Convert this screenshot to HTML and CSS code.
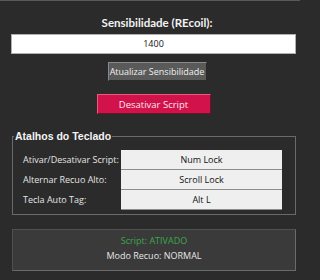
FILE: index.html
```html
<!DOCTYPE html>
<html>
<head>
<meta charset="utf-8">
<link rel="stylesheet" href="styles.css">
</head>
<body>
<div class="app">
  <div class="title">Sensibilidade (REcoil):</div>
  <div class="entry">1400</div>
  <div class="center"><button class="btn-grey">Atualizar Sensibilidade</button></div>
  <div class="center"><button class="btn-red">Desativar Script</button></div>
  <fieldset class="group">
    <legend>Atalhos do Teclado</legend>
    <div class="rows">
      <div class="lbl">Ativar/Desativar Script:</div><div class="key">Num Lock</div>
      <div class="lbl">Alternar Recuo Alto:</div><div class="key">Scroll Lock</div>
      <div class="lbl">Tecla Auto Tag:</div><div class="key">Alt L</div>
    </div>
  </fieldset>
  <div class="status">
    <div class="on">Script: ATIVADO</div>
    <div class="mode">Modo Recuo: NORMAL</div>
  </div>
</div>
</body>
</html>
```
FILE: styles.css
```css
html, body { margin: 0; padding: 0; }
body {
  width: 300px; height: 280px; overflow: hidden;
  background: #2b2b2b;
  font-family: "Open Sans", "Noto Sans", sans-serif;
  color: #e8e8e8;
}
.app {
  border-top: 1px solid #5a5a5a;
  height: 279px;
  box-sizing: border-box;
  padding: 15px 4px 0 11px;
}
.title {
  text-align: center;
  font-family: "Lato", "Open Sans", sans-serif;
  font-weight: bold;
  font-size: 11.5px;
  line-height: 14px;
  color: #f2f2f2;
  padding-left: 7px;
}
.entry {
  margin-top: 4px;
  height: 20px;
  box-sizing: border-box;
  width: 285px;
  background: #fff;
  border: 1px solid #b0b0b0;
  color: #111;
  font-size: 9px;
  line-height: 18px;
  text-align: center;
}
.center { display: flex; justify-content: center; width: 285px; }
.btn-grey {
  margin-top: 8px;
  margin-left: 7px;
  width: 99px; height: 19px;
  background: #5a5a5a;
  border: 1px solid #8a8a8a;
  border-right-color: #2a2a2a;
  border-bottom-color: #2a2a2a;
  color: #f0f0f0;
  font-family: inherit;
  font-size: 9px;
  padding: 0;
}
.btn-red {
  margin-top: 13px;
  width: 114px; height: 20px;
  background: #d1124b;
  border: 1px solid #e85a80;
  border-right-color: #70102a;
  border-bottom-color: #70102a;
  color: #fbe8ee;
  font-family: inherit;
  font-size: 9.5px;
  padding: 0;
}
.group {
  margin: 16px 0 0 1px;
  width: 284px;
  height: 85px;
  box-sizing: border-box;
  border: 1px solid #6a6a6a;
  border-radius: 0;
  padding: 0 12px 0 10px;
}
.group legend {
  font-family: "Liberation Sans", Arial, sans-serif;
  font-weight: bold;
  font-size: 10.5px;
  color: #f4f4f4;
  padding: 0 1px;
  margin-left: -9px;
}
.rows {
  display: grid;
  grid-template-columns: 98px 161px;
  grid-auto-rows: 20px;
  margin-top: 8px;
}
.lbl {
  font-size: 9px;
  line-height: 20px;
  color: #e4e4e4;
}
.key {
  background: #efefef;
  border-bottom: 1px solid #8c8c8c;
  color: #111;
  font-size: 9px;
  line-height: 19px;
  text-align: center;
}
.status {
  margin: 14px 0 0 1px;
  width: 284px;
  height: 42px;
  box-sizing: border-box;
  background: #3a3a3a;
  border: 1px solid #6a6a6a;
  border-top-color: #505050;
  border-left-color: #505050;
  text-align: center;
  font-size: 9px;
  padding-top: 3px;
}
.on { color: #3aa84a; line-height: 15px; }
.mode { color: #e6e6e6; line-height: 15px; }
```
